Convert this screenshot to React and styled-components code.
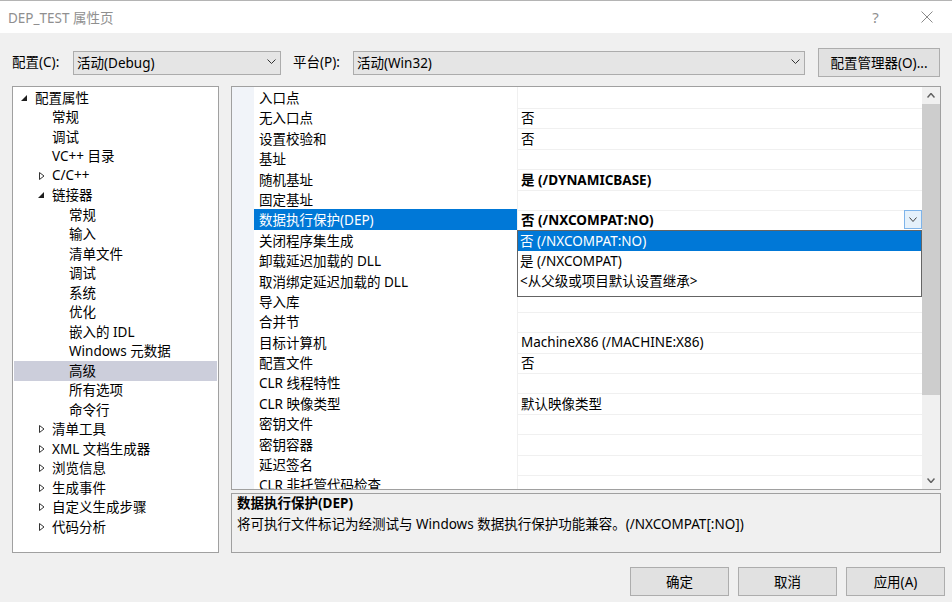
import React from "react";
import styled, { createGlobalStyle } from "styled-components";

const FONT = `"Noto Sans", "Noto Sans CJK SC", sans-serif`;
const ROW_H = 20.4;

const GlobalStyle = createGlobalStyle`
  html, body {
    margin: 0;
    padding: 0;
    background: #f0f0f0;
    overflow: hidden;
  }
  body {
    font-family: ${FONT};
    font-size: 13.5px;
    color: #000;
  }
`;

const Window = styled.div`
  width: 952px;
  height: 602px;
  display: flex;
  flex-direction: column;
  box-sizing: border-box;
  border-top: 1px solid #b4b4b4;
  background: #f0f0f0;
`;

const TitleBar = styled.div`
  height: 32px;
  flex: 0 0 32px;
  display: flex;
  align-items: center;
  background: #fff;
  padding-left: 8px;
  color: #8f8f8f;
`;

const TitleControls = styled.div`
  margin-left: auto;
  display: flex;
  height: 100%;
`;

const TitleControl = styled.div`
  width: 51px;
  height: 100%;
  display: flex;
  align-items: center;
  justify-content: center;
  color: #8f8f8f;
  font-size: 15px;
`;

const ConfigRow = styled.div`
  margin-top: 15px;
  height: 29px;
  flex: 0 0 29px;
  display: flex;
  align-items: center;
  padding: 0 12px;
`;

const Label = styled.span`
  width: ${(p) => p.width}px;
  margin-left: ${(p) => p.gap || 0}px;
  margin-bottom: 3px;
  white-space: nowrap;
`;

const Combo = styled.div`
  width: ${(p) => p.width}px;
  height: 24px;
  box-sizing: border-box;
  border: 1px solid #acacac;
  background: #e5e5e5;
  display: flex;
  align-items: center;
  justify-content: space-between;
  padding: 0 4px 2px 3px;
`;

const Button = styled.div`
  width: ${(p) => p.width}px;
  height: 29px;
  margin-left: ${(p) => p.gap || 0}px;
  box-sizing: border-box;
  border: 1px solid #adadad;
  background: #e1e1e1;
  display: flex;
  align-items: center;
  justify-content: center;
  padding-bottom: 2px;
  white-space: nowrap;
`;

const Main = styled.div`
  margin-top: 9px;
  height: 467px;
  flex: 0 0 467px;
  display: flex;
  gap: 12px;
  padding: 0 11px 0 12px;
`;

const Tree = styled.div`
  width: 207px;
  flex: 0 0 207px;
  box-sizing: border-box;
  border: 1px solid #a0a0a0;
  background: #fff;
  padding: 1px;
`;

const TreeRow = styled.div`
  height: 19.5px;
  box-sizing: border-box;
  display: flex;
  align-items: center;
  padding-left: ${(p) => 5 + p.level * 17}px;
  padding-bottom: 2px;
  background: ${(p) => (p.selected ? "#cccedb" : "transparent")};
  white-space: nowrap;
`;

const Arrow = styled.span`
  width: 16px;
  flex: 0 0 16px;
  display: flex;
  align-items: center;
  margin-top: 2px;
`;

const RightCol = styled.div`
  flex: 1;
  display: flex;
  flex-direction: column;
  gap: 3px;
`;

const Grid = styled.div`
  height: 404px;
  flex: 0 0 404px;
  box-sizing: border-box;
  border: 1px solid #a0a0a0;
  background: #fff;
  display: flex;
`;

const Table = styled.div`
  flex: 1;
  position: relative;
  overflow: hidden;
`;

const PropRow = styled.div`
  height: ${ROW_H}px;
  display: grid;
  grid-template-columns: 22px 264px 1fr;
`;

const Gutter = styled.div`
  background: #f1f4f9;
`;

const NameCell = styled.div`
  box-sizing: border-box;
  border-bottom: 1px solid #f0f0f0;
  border-right: 1px solid #f0f0f0;
  padding: 0 0 1px 5px;
  display: flex;
  align-items: center;
  white-space: nowrap;
  background: ${(p) => (p.selected ? "#0078d7" : "#fff")};
  color: ${(p) => (p.selected ? "#fff" : "#000")};
`;

const ValueCell = styled.div`
  box-sizing: border-box;
  border-bottom: 1px solid #f0f0f0;
  padding: 0 0 1px 3px;
  display: flex;
  align-items: center;
  white-space: nowrap;
  font-weight: ${(p) => (p.bold ? 700 : 400)};
`;

const DropButton = styled.div`
  margin-left: auto;
  margin-top: 1px;
  width: 18px;
  height: 19px;
  box-sizing: border-box;
  border: 1px solid #7eb4ea;
  background: #e5f1fb;
  display: flex;
  align-items: center;
  justify-content: center;
`;

const DropList = styled.div`
  position: absolute;
  left: 285px;
  top: ${ROW_H * 7}px;
  width: 405px;
  box-sizing: border-box;
  border: 1px solid #646464;
  background: #fff;
  padding-bottom: 5px;
`;

const DropItem = styled.div`
  height: 20px;
  box-sizing: border-box;
  display: flex;
  align-items: center;
  padding: 0 0 2px 2px;
  white-space: nowrap;
  background: ${(p) => (p.selected ? "#0078d7" : "#fff")};
  color: ${(p) => (p.selected ? "#fff" : "#000")};
`;

const Scrollbar = styled.div`
  width: 18px;
  flex: 0 0 18px;
  background: #f0f0f0;
  display: flex;
  flex-direction: column;
`;

const ScrollArrow = styled.div`
  height: 17px;
  flex: 0 0 17px;
  display: flex;
  align-items: center;
  justify-content: center;
  margin-top: ${(p) => (p.bottom ? "auto" : "0")};
`;

const Thumb = styled.div`
  height: 291px;
  background: #cdcdcd;
`;

const Desc = styled.div`
  height: 60px;
  flex: 0 0 60px;
  box-sizing: border-box;
  border: 1px solid #a0a0a0;
  background: #f0f0f0;
  padding: 0 5px;
  line-height: 21px;
`;

const DescTitle = styled.div`
  font-weight: 700;
  margin-top: -1px;
`;

const Footer = styled.div`
  margin-top: 14px;
  display: flex;
  justify-content: flex-end;
  gap: 9px;
  padding-right: 7px;
`;

const Chevron = ({ dir = "down", w = 9, h = 5, color = "#333", sw = 1 }) => (
  <svg width={w} height={h} viewBox={`0 0 ${w} ${h}`} fill="none">
    {dir === "down" ? (
      <polyline points={`0.5,0.5 ${w / 2},${h - 0.5} ${w - 0.5},0.5`} stroke={color} strokeWidth={sw} />
    ) : (
      <polyline points={`0.5,${h - 0.5} ${w / 2},0.5 ${w - 0.5},${h - 0.5}`} stroke={color} strokeWidth={sw} />
    )}
  </svg>
);

const TreeArrow = ({ open }) =>
  open ? (
    <svg width="10" height="10" viewBox="0 0 10 10">
      <polygon points="2,8 8,8 8,2" fill="#1e1e1e" />
    </svg>
  ) : (
    <svg width="10" height="10" viewBox="0 0 10 10">
      <polygon points="3.5,1.5 8,5 3.5,8.5" fill="#fff" stroke="#333" strokeWidth="1" />
    </svg>
  );

// DATA
const treeItems = [
  { label: "配置属性", level: 0, arrow: "open" },
  { label: "常规", level: 1 },
  { label: "调试", level: 1 },
  { label: "VC++ 目录", level: 1 },
  { label: "C/C++", level: 1, arrow: "closed" },
  { label: "链接器", level: 1, arrow: "open" },
  { label: "常规", level: 2 },
  { label: "输入", level: 2 },
  { label: "清单文件", level: 2 },
  { label: "调试", level: 2 },
  { label: "系统", level: 2 },
  { label: "优化", level: 2 },
  { label: "嵌入的 IDL", level: 2 },
  { label: "Windows 元数据", level: 2 },
  { label: "高级", level: 2, selected: true },
  { label: "所有选项", level: 2 },
  { label: "命令行", level: 2 },
  { label: "清单工具", level: 1, arrow: "closed" },
  { label: "XML 文档生成器", level: 1, arrow: "closed" },
  { label: "浏览信息", level: 1, arrow: "closed" },
  { label: "生成事件", level: 1, arrow: "closed" },
  { label: "自定义生成步骤", level: 1, arrow: "closed" },
  { label: "代码分析", level: 1, arrow: "closed" },
];

const props = [
  { name: "入口点", value: "" },
  { name: "无入口点", value: "否" },
  { name: "设置校验和", value: "否" },
  { name: "基址", value: "" },
  { name: "随机基址", value: "是 (/DYNAMICBASE)", bold: true },
  { name: "固定基址", value: "" },
  { name: "数据执行保护(DEP)", value: "否 (/NXCOMPAT:NO)", bold: true, selected: true },
  { name: "关闭程序集生成", value: "" },
  { name: "卸载延迟加载的 DLL", value: "" },
  { name: "取消绑定延迟加载的 DLL", value: "" },
  { name: "导入库", value: "" },
  { name: "合并节", value: "" },
  { name: "目标计算机", value: "MachineX86 (/MACHINE:X86)" },
  { name: "配置文件", value: "否" },
  { name: "CLR 线程特性", value: "" },
  { name: "CLR 映像类型", value: "默认映像类型" },
  { name: "密钥文件", value: "" },
  { name: "密钥容器", value: "" },
  { name: "延迟签名", value: "" },
  { name: "CLR 非托管代码检查", value: "" },
];

const options = ["否 (/NXCOMPAT:NO)", "是 (/NXCOMPAT)", "<从父级或项目默认设置继承>"];

const App = () => (
  <>
    <GlobalStyle />
    <Window>
      <TitleBar>
        DEP_TEST 属性页
        <TitleControls>
          <TitleControl>?</TitleControl>
          <TitleControl>
            <svg width="12" height="12" viewBox="0 0 12 12">
              <path d="M0.5 0.5 L11.5 11.5 M11.5 0.5 L0.5 11.5" stroke="#8a8a8a" strokeWidth="1" />
            </svg>
          </TitleControl>
        </TitleControls>
      </TitleBar>

      <ConfigRow>
        <Label width={61}>配置(C):</Label>
        <Combo width={208}>
          <span>活动(Debug)</span>
          <Chevron />
        </Combo>
        <Label width={60} gap={12}>平台(P):</Label>
        <Combo width={452}>
          <span>活动(Win32)</span>
          <Chevron />
        </Combo>
        <Button width={122} gap={13}>配置管理器(O)...</Button>
      </ConfigRow>

      <Main>
        <Tree>
          {treeItems.map((item, index) => (
            <TreeRow key={index} level={item.level} selected={item.selected}>
              <Arrow>{item.arrow && <TreeArrow open={item.arrow === "open"} />}</Arrow>
              {item.label}
            </TreeRow>
          ))}
        </Tree>

        <RightCol>
          <Grid>
            <Table>
              {props.map((p, index) => (
                <PropRow key={index}>
                  <Gutter />
                  <NameCell selected={p.selected}>{p.name}</NameCell>
                  <ValueCell bold={p.bold}>
                    {p.value}
                    {p.selected && (
                      <DropButton>
                        <Chevron w={8} h={5} color="#404040" />
                      </DropButton>
                    )}
                  </ValueCell>
                </PropRow>
              ))}
              <DropList>
                {options.map((o, index) => (
                  <DropItem key={index} selected={index === 0}>
                    {o}
                  </DropItem>
                ))}
              </DropList>
            </Table>
            <Scrollbar>
              <ScrollArrow>
                <Chevron dir="up" w={8} h={5} color="#606060" sw={1.5} />
              </ScrollArrow>
              <Thumb />
              <ScrollArrow bottom>
                <Chevron w={8} h={5} color="#606060" sw={1.5} />
              </ScrollArrow>
            </Scrollbar>
          </Grid>
          <Desc>
            <DescTitle>数据执行保护(DEP)</DescTitle>
            <div>将可执行文件标记为经测试与 Windows 数据执行保护功能兼容。(/NXCOMPAT[:NO])</div>
          </Desc>
        </RightCol>
      </Main>

      <Footer>
        <Button width={99}>确定</Button>
        <Button width={99}>取消</Button>
        <Button width={99}>应用(A)</Button>
      </Footer>
    </Window>
  </>
);

export default App;
